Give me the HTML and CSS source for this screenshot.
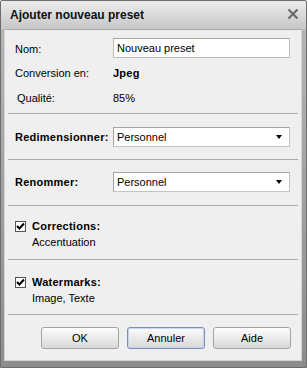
FILE: index.html
```html
<!DOCTYPE html>
<html lang="fr">
<head>
  <meta charset="UTF-8">
  <title>Ajouter nouveau preset</title>
  <link rel="stylesheet" href="styles.css">
</head>
<body>
  <div class="window">
    <div class="titlebar">
      <span class="title">Ajouter nouveau preset</span>
      <svg class="close" width="12" height="12" viewBox="0 0 12 12">
        <path d="M1.5 1.5 L10.5 10.5 M10.5 1.5 L1.5 10.5" stroke="#6b6b6b" stroke-width="2.2" fill="none"/>
      </svg>
    </div>

    <div class="dialog">
      <div class="group info">
        <label class="lbl">Nom:</label>
        <input type="text" class="field" value="Nouveau preset">
        <span class="lbl">Conversion en:</span>
        <span class="val strong">Jpeg</span>
        <span class="lbl indent">Qualité:</span>
        <span class="val">85%</span>
      </div>

      <div class="sep"></div>

      <div class="group pick">
        <span class="lbl strong">Redimensionner:</span>
        <div class="select"><span>Personnel</span><i class="arrow"></i></div>
      </div>

      <div class="sep"></div>

      <div class="group pick">
        <span class="lbl strong">Renommer:</span>
        <div class="select"><span>Personnel</span><i class="arrow"></i></div>
      </div>

      <div class="sep"></div>

      <div class="group option">
        <div class="check-row">
          <span class="check">
            <svg width="9" height="9" viewBox="0 0 9 9"><path d="M1 4 L3.5 6.5 L8 1.5" stroke="#000" stroke-width="2" fill="none"/></svg>
          </span>
          <span class="strong">Corrections:</span>
        </div>
        <div class="detail">Accentuation</div>
      </div>

      <div class="sep"></div>

      <div class="group option">
        <div class="check-row">
          <span class="check">
            <svg width="9" height="9" viewBox="0 0 9 9"><path d="M1 4 L3.5 6.5 L8 1.5" stroke="#000" stroke-width="2" fill="none"/></svg>
          </span>
          <span class="strong">Watermarks:</span>
        </div>
        <div class="detail">Image, Texte</div>
      </div>

      <div class="sep"></div>

      <div class="buttons">
        <button>OK</button>
        <button class="focus">Annuler</button>
        <button>Aide</button>
      </div>
    </div>
  </div>
</body>
</html>
```

FILE: styles.css
```css
body {
  margin: 0;
  padding: 0;
  font-family: "Liberation Sans", Arial, sans-serif;
  font-size: 11px;
  color: #000;
}
.window {
  width: 307px;
  height: 368px;
  box-sizing: border-box;
  border: 1px solid #6e6e6e;
  border-radius: 2px 2px 0 0;
  background: linear-gradient(#ececec 0, #c7c7c7 28px, #b4b4b4 29px, #8c8c8c 100%);
  display: flex;
  flex-direction: column;
}
.titlebar {
  height: 28px;
  display: flex;
  align-items: center;
  justify-content: space-between;
  padding: 0 7px 0 9px;
}
.title {
  font-size: 12px;
  font-weight: bold;
  color: #111;
}
.close {
  margin-top: -2px;
}
.dialog {
  flex: 1;
  margin: 0 4px 6px 3px;
  background: #efefef;
  border: 1px solid #d4d4d4;
  border-top-color: #a9a9a9;
  display: flex;
  flex-direction: column;
}
.strong {
  font-weight: bold;
  letter-spacing: 0.25px;
}
.group {
  padding: 0 11px 0 10px;
}
.info {
  display: grid;
  grid-template-columns: 98px 1fr;
  grid-template-rows: 22px 25px 25px;
  align-items: center;
  padding-top: 8px;
  padding-bottom: 3px;
}
.indent {
  padding-left: 2px;
}
.field {
  align-self: start;
  box-sizing: border-box;
  height: 20px;
  margin: 0;
  padding: 0 3px;
  font: inherit;
  border: 1px solid #bdbdbd;
  border-top-color: #a5a5a5;
  background: #fff;
}
.pick {
  display: grid;
  grid-template-columns: 98px 1fr;
  align-items: center;
  padding-top: 13px;
  padding-bottom: 12px;
}
.pick + .sep + .pick {
  padding-top: 12px;
  padding-bottom: 13px;
}
.select {
  height: 20px;
  box-sizing: border-box;
  border: 1px solid #c4c4c4;
  border-top-color: #a5a5a5;
  border-left-color: #a5a5a5;
  background: #fff;
  display: flex;
  align-items: center;
  justify-content: space-between;
  padding: 0 7px 0 3px;
}
.arrow {
  width: 0;
  height: 0;
  border-left: 3.5px solid transparent;
  border-right: 3.5px solid transparent;
  border-top: 4px solid #000;
}
.sep {
  height: 1px;
  margin: 0 3px;
  background: #a9a9a9;
}
.option {
  padding-top: 12px;
  padding-bottom: 9px;
  line-height: 16px;
}
.option + .sep + .option {
  padding-top: 14px;
  padding-bottom: 8px;
}
.check-row {
  display: flex;
  align-items: center;
  gap: 6px;
}
.check {
  width: 11px;
  height: 11px;
  box-sizing: border-box;
  border: 1px solid #555;
  background: #fff;
  display: flex;
  align-items: center;
  justify-content: center;
}
.detail {
  padding-left: 17px;
}
.buttons {
  display: flex;
  justify-content: flex-end;
  gap: 8px;
  padding: 12px 10px 0 0;
}
button {
  width: 78px;
  height: 22px;
  margin: 0;
  font: inherit;
  color: #000;
  border: 1px solid #a3a3a3;
  border-radius: 3px;
  background: linear-gradient(#fdfdfd, #e6e6e6 60%, #d9d9d9);
}
button.focus {
  border-color: #7c8fb8;
  box-shadow: inset 0 0 0 1px #c8d4ee;
}
```
